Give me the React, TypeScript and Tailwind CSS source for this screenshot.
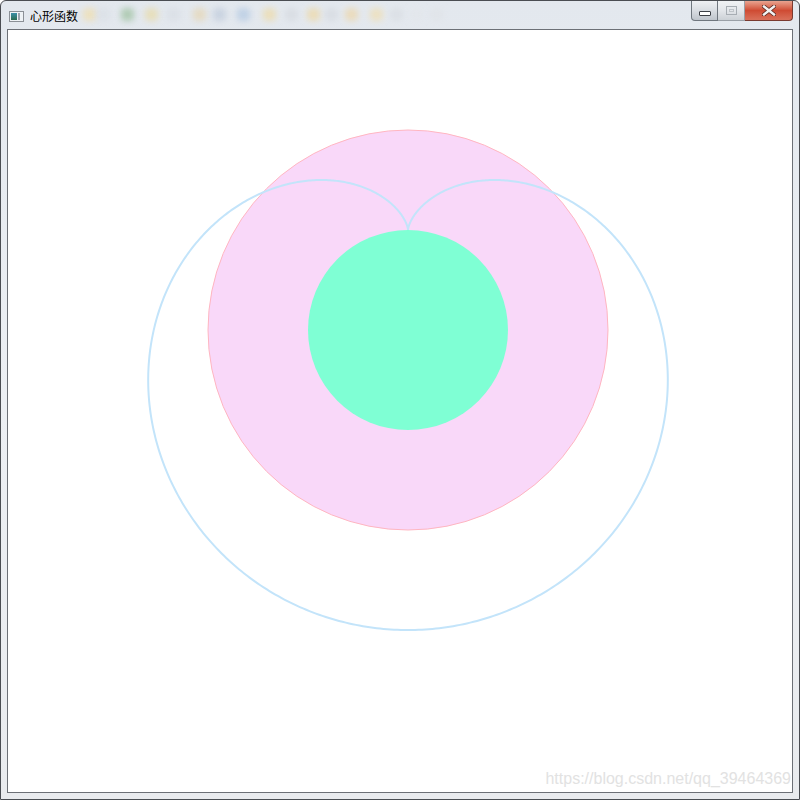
import React from 'react';

// cardioid r = a(1 - cos t), cusp at (cx, cy), opening downward
function cardioidPath(cx: number, cy: number, a: number) {
  const pts: string[] = [];
  for (let i = 0; i <= 720; i++) {
    const t = (i / 720) * Math.PI * 2;
    const r = a * (1 - Math.cos(t));
    const x = cx + r * Math.sin(t);
    const y = cy - r * Math.cos(t);
    pts.push(`${i === 0 ? 'M' : 'L'}${x.toFixed(2)} ${y.toFixed(2)}`);
  }
  return pts.join(' ') + ' Z';
}

const blobs = [
  { x: 88, c: 'bg-[#f3dca0]' },
  { x: 102, c: 'bg-[#d8dde4]' },
  { x: 126, c: 'bg-[#8fb88f]' },
  { x: 150, c: 'bg-[#e9d89a]' },
  { x: 172, c: 'bg-[#d6dbe2]' },
  { x: 198, c: 'bg-[#e6d2a8]' },
  { x: 218, c: 'bg-[#b9c6d8]' },
  { x: 242, c: 'bg-[#a9c2e0]' },
  { x: 268, c: 'bg-[#f0d89a]' },
  { x: 290, c: 'bg-[#d3d7dd]' },
  { x: 312, c: 'bg-[#f0d596]' },
  { x: 330, c: 'bg-[#d3d7dd]' },
  { x: 350, c: 'bg-[#efd39c]' },
  { x: 375, c: 'bg-[#f2dca6]' },
  { x: 395, c: 'bg-[#d7dbe0]' },
  { x: 415, c: 'bg-[#e3e6ea]' },
  { x: 435, c: 'bg-[#dfe2e6]' },
];

function TitleBar() {
  return (
    <div className="relative h-[30px] flex items-start">
      {/* blurred content behind the glass */}
      {blobs.map((b, i) => (
        <div
          key={i}
          className={`absolute top-[7px] w-[13px] h-[13px] rounded-sm blur-[3px] opacity-60 ${b.c}`}
          style={{ left: b.x - 6 }}
        />
      ))}
      <div className="relative flex items-center pl-[8px] pt-[8px] gap-[6px]">
        <div className="w-[15px] h-[11px] border border-[#8b9096] bg-[#eef2f5] flex items-center gap-[1px] px-[1px]">
          <div className="w-[6px] h-[7px] bg-gradient-to-b from-[#3b8fa8] to-[#2b6b4f]" />
          <div className="w-[2px] h-[7px] bg-[#9aa3ad]" />
        </div>
        <span className="text-[12px] leading-[14px] text-black font-['Noto_Sans_CJK_SC',sans-serif]">心形函数</span>
      </div>
      <div className="absolute right-[6px] top-0 flex h-[20px]">
        <div className="w-[27px] h-full rounded-bl-[4px] border border-t-0 border-[#6f767e] bg-gradient-to-b from-[#eef0f3] via-[#d9dde2] to-[#bfc5cc] flex items-center justify-center">
          <div className="w-[12px] h-[5px] mt-[5px] border border-[#3c4046] bg-white rounded-[1px]" />
        </div>
        <div className="w-[27px] h-full border border-t-0 border-l-0 border-[#9aa0a7] bg-gradient-to-b from-[#f0f2f4] via-[#e3e6ea] to-[#ccd1d6] flex items-center justify-center">
          <div className="w-[11px] h-[9px] border border-[#a7adb3] flex items-center justify-center">
            <div className="w-[5px] h-[3px] border border-[#bfc4c9]" />
          </div>
        </div>
        <div className="w-[48px] h-full rounded-br-[4px] border border-t-0 border-l-0 border-[#7a3a30] bg-gradient-to-b from-[#e8a390] via-[#cf4b33] to-[#d9705a] flex items-center justify-center">
          <svg width="14" height="11" viewBox="0 0 14 11">
            <path d="M2 1.5 L12 9.5 M12 1.5 L2 9.5" stroke="#5a2a22" strokeWidth="4" strokeLinecap="square" />
            <path d="M2 1.5 L12 9.5 M12 1.5 L2 9.5" stroke="#f2f2f2" strokeWidth="2.4" strokeLinecap="square" />
          </svg>
        </div>
      </div>
    </div>
  );
}

export default function App() {
  return (
    <div className="w-[800px] h-[800px] bg-white">
      <div className="w-full h-full flex flex-col rounded-t-[6px] border border-[#4a4d52] bg-gradient-to-b from-[#e3e8ee] via-[#eceff3] to-[#e9ebee] overflow-hidden">
        <TitleBar />
        <div className="flex-1 flex px-[6px] pb-[6px]">
          <div className="relative flex-1 border border-[#6c7076] bg-white">
            <svg width="784" height="762" viewBox="0 0 784 762" className="block">
              <circle cx="400" cy="300" r="200" fill="#f9d8f9" stroke="#ffb6c1" strokeWidth="1" />
              <circle cx="400" cy="300" r="100" fill="#7fffd4" />
              <path d={cardioidPath(400, 200, 200)} fill="none" stroke="#c3e4fa" strokeWidth="2" />
            </svg>
            <span className="absolute right-[1px] bottom-[4px] text-[16px] leading-[18px] text-[#e2e2e2] font-['Liberation_Sans',Arial,sans-serif]">
              https://blog.csdn.net/qq_39464369
            </span>
          </div>
        </div>
      </div>
    </div>
  );
}
